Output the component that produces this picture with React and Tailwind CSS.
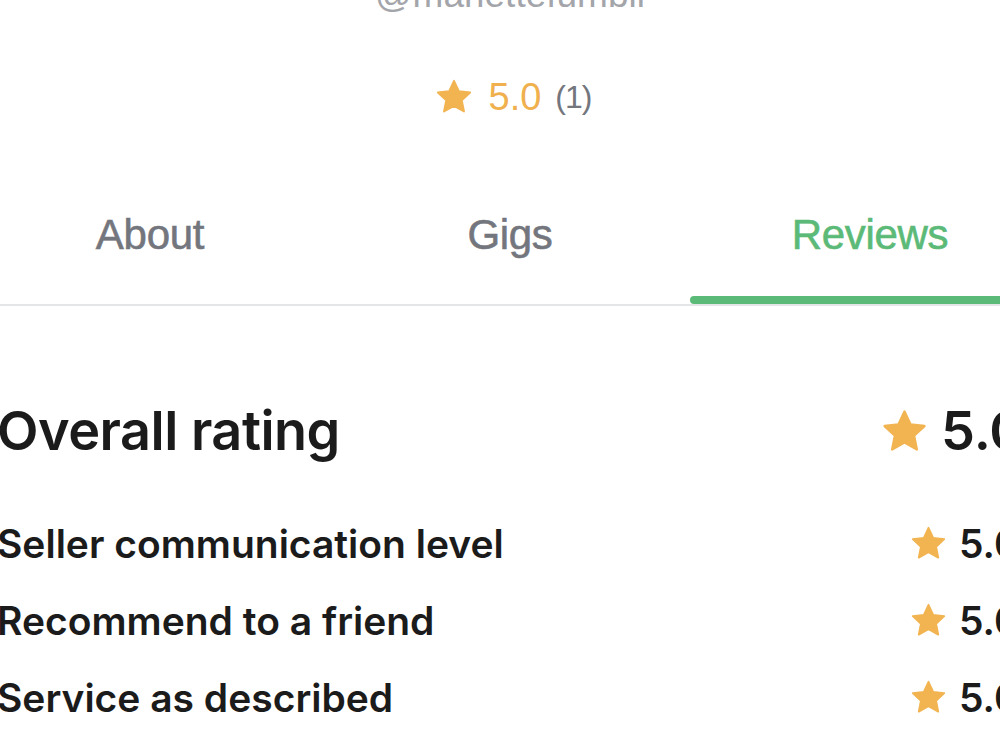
import React from "react";

function Star({ size, className = "" }) {
  return (
    <svg width={size} height={size} viewBox="0 0 24 24" className={className}>
      <path
        d="M12 1.8l3.05 6.55 7.15.85-5.28 4.9 1.4 7.07L12 17.6l-6.32 3.57 1.4-7.07L1.8 9.2l7.15-.85L12 1.8z"
        fill="#f2b451"
        stroke="#f2b451"
        strokeWidth="1.2"
        strokeLinejoin="round"
      />
    </svg>
  );
}

const rows = [
  "Seller communication level",
  "Recommend to a friend",
  "Service as described",
];

export default function App() {
  return (
    <div className="w-[1000px] h-[750px] overflow-hidden bg-white">
      <div className="flex flex-col items-center">
        <div
          className="-mt-[24px] text-[37px] leading-none text-[#a3a5aa] pl-[20px]"
          style={{ fontFamily: "'Liberation Sans', Arial, sans-serif" }}
        >
          @mariettefumbli
        </div>
        <div
          className="mt-[65px] flex items-center pl-[26px]"
          style={{ fontFamily: "'Liberation Sans', Arial, sans-serif" }}
        >
          <Star size={38} />
          <span className="ml-[16px] text-[38px] leading-none text-[#f0b04e]">5.0</span>
          <span className="ml-[14px] text-[32px] leading-none tracking-[-1px] text-[#74767e]">(1)</span>
        </div>
      </div>

      <div
        className="mt-[98px] -ml-[30px] w-[1100px] flex border-b-2 border-[#e4e5e7]"
        style={{ fontFamily: "'Liberation Sans', Arial, sans-serif" }}
      >
        {["About", "Gigs", "Reviews"].map((t, i) => (
          <div key={t} className="w-[360px] flex flex-col items-center">
            <span
              className={
                "text-[42px] leading-none tracking-[-0.3px] " +
                (i === 2 ? "text-[#5cba78]" : "text-[#74767e]")
              }
              style={{ WebkitTextStroke: i === 2 ? "0.6px #5cba78" : "0.6px #74767e" }}
            >
              {t}
            </span>
            <div
              className={
                "mt-[40px] h-[8px] w-full rounded-full " +
                (i === 2 ? "bg-[#5cba78]" : "bg-transparent")
              }
            />
          </div>
        ))}
      </div>

      <div
        className="-ml-[3px] w-[1060px] pt-[98px] text-[#1b1b1b]"
        style={{ fontFamily: "Inter, 'Noto Sans', sans-serif" }}
      >
        <div className="flex items-center justify-between">
          <span className="text-[54px] font-semibold leading-none tracking-[-0.5px]">
            Overall rating
          </span>
          <div className="flex items-center gap-[13px] w-[176px]">
            <Star size={47} />
            <span className="text-[54px] font-semibold leading-none">5.0</span>
          </div>
        </div>
        <div className="mt-[66px] flex flex-col gap-[38px]">
          {rows.map((r) => (
            <div key={r} className="flex items-center justify-between">
              <span className="text-[39px] font-semibold leading-none">{r}</span>
              <div className="flex items-center gap-[12px] w-[147px]">
                <Star size={37} />
                <span className="text-[39px] font-semibold leading-none">5.0</span>
              </div>
            </div>
          ))}
        </div>
      </div>
    </div>
  );
}
